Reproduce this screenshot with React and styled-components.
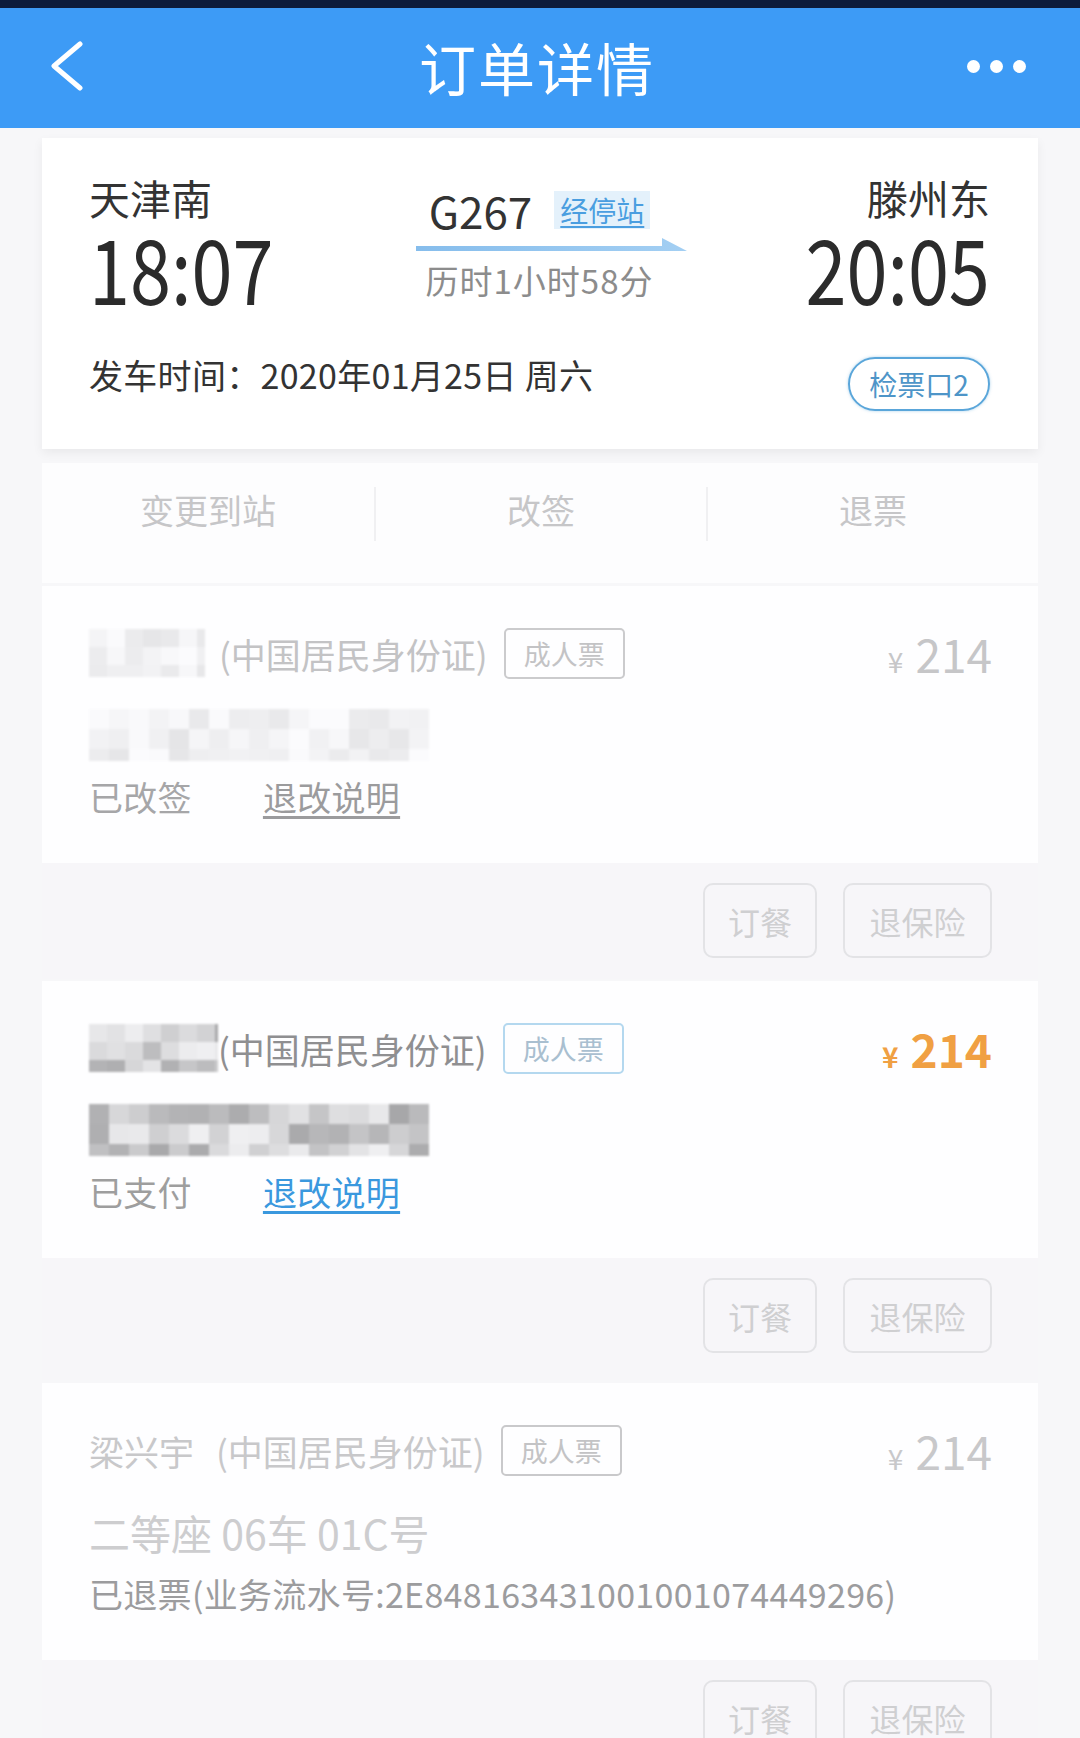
import React from "react";
import styled, { createGlobalStyle } from "styled-components";

const GlobalStyle = createGlobalStyle`
  html, body {
    margin: 0;
    padding: 0;
    height: 1738px;
    overflow: hidden;
    background: #f7f7f9;
  }
  body {
    font-family: "Noto Sans CJK SC", "Noto Sans", sans-serif;
    color: #333;
  }
  * { box-sizing: border-box; }
`;

const Page = styled.div`
  width: 1080px;
  height: 1738px;
  overflow: hidden;
  background: #f7f7f9;
`;

const StatusStrip = styled.div`
  height: 8px;
  background: #0c1c3c;
`;

const Header = styled.header`
  height: 120px;
  background: #3d9bf6;
  display: grid;
  grid-template-columns: 1fr auto 1fr;
  align-items: center;
  padding: 0 54px 4px 48px;
`;

const BackButton = styled.div`
  display: flex;
  align-items: center;
`;

const Title = styled.h1`
  margin: 0;
  font-size: 57px;
  font-weight: 400;
  color: #fff;
  letter-spacing: 2px;
  line-height: 1;
`;

const Dots = styled.div`
  justify-self: end;
  display: flex;
  gap: 10px;
`;

const Dot = styled.span`
  width: 13px;
  height: 13px;
  border-radius: 50%;
  background: #fff;
`;

const Content = styled.main`
  padding: 10px 42px 0;
  display: flex;
  flex-direction: column;
`;

const TripCard = styled.section`
  background: #fff;
  padding: 36px 48px 38px 47px;
  box-shadow: 0 4px 10px rgba(0, 0, 0, 0.06);
`;

const TripRow = styled.div`
  display: flex;
  justify-content: space-between;
`;

const StationCol = styled.div`
  display: flex;
  flex-direction: column;
  align-items: ${(p) => (p.$right ? "flex-end" : "flex-start")};
  width: 230px;
`;

const Station = styled.div`
  font-size: 41px;
  line-height: 46px;
  color: #333;
`;

const Time = styled.div`
  margin-top: 8px;
  font-size: 90px;
  line-height: 76px;
  height: 80px;
  color: #2b2b2b;
  transform: scaleX(0.82);
  transform-origin: ${(p) => (p.$right ? "right" : "left")} center;
`;

const MiddleCol = styled.div`
  flex: 1;
  display: flex;
  flex-direction: column;
  align-items: center;
  padding-top: 12px;
`;

const TrainRow = styled.div`
  display: flex;
  align-items: center;
  height: 48px;
`;

const TrainNo = styled.span`
  font-size: 44px;
  color: #333;
`;

const StopsLink = styled.span`
  margin-left: 22px;
  padding: 2px 6px;
  background: #e4f1fb;
  color: #4a9ee0;
  font-size: 28px;
  line-height: 34px;
  text-decoration: underline;
  text-underline-offset: 4px;
`;

const Arrow = styled.svg`
  display: block;
  margin: 4px 0 0 24px;
`;

const Duration = styled.div`
  margin-top: 8px;
  font-size: 33px;
  line-height: 40px;
  letter-spacing: 1px;
  color: #8c8c8c;
`;

const DateRow = styled.div`
  margin-top: 49px;
  display: flex;
  justify-content: space-between;
  align-items: flex-start;
`;

const DepartDate = styled.div`
  font-size: 34px;
  line-height: 36px;
  letter-spacing: 0.3px;
  color: #333;
`;

const GateBadge = styled.div`
  width: 142px;
  height: 54px;
  border: 2.5px solid #5aa6da;
  border-radius: 27px;
  display: flex;
  align-items: center;
  justify-content: center;
  font-size: 28px;
  color: #4e95c8;
  box-shadow: 0 0 3px rgba(90, 166, 218, 0.5);
`;

const ActionTabs = styled.nav`
  margin-top: 14px;
  height: 120px;
  background: #fdfdfe;
  display: grid;
  grid-template-columns: repeat(3, 1fr);
  align-items: start;
  padding-top: 24px;
`;

const Tab = styled.div`
  text-align: center;
  font-size: 34px;
  color: #c6c6c8;
  height: 54px;
  line-height: 46px;
  border-left: ${(p) => (p.$divided ? "2px solid #f0f0f2" : "none")};
`;

const PassengerCard = styled.section`
  margin-top: ${(p) => p.$gap}px;
  display: flex;
  flex-direction: column;
`;

const PassengerBody = styled.div`
  height: 277px;
  background: #fefeff;
  padding: 40px 46px 0 47px;
`;

const NameRow = styled.div`
  display: flex;
  align-items: center;
  height: 54px;
`;

const NameText = styled.span`
  font-size: 35px;
  color: ${(p) => p.$color};
  white-space: nowrap;
`;

const HolderName = styled.span`
  margin-right: 22px;
`;

const TicketType = styled.span`
  margin-left: 16px;
  width: 121px;
  height: 51px;
  border: 2px solid ${(p) => p.$border};
  border-radius: 5px;
  display: flex;
  align-items: center;
  justify-content: center;
  font-size: 27px;
  color: ${(p) => p.$color};
`;

const Price = styled.div`
  margin-left: auto;
  display: flex;
  align-items: baseline;
  gap: 12px;
  color: ${(p) => p.$color};
  font-weight: ${(p) => (p.$bold ? 700 : 400)};
`;

const Yen = styled.span`
  font-size: 28px;
`;

const Amount = styled.span`
  font-size: 46px;
  line-height: 54px;
`;

const SeatRow = styled.div`
  margin-top: 26px;
  height: 58px;
  display: flex;
  align-items: center;
  font-size: 41px;
  color: ${(p) => p.$color};
  white-space: pre;
`;

const StatusRow = styled.div`
  margin-top: 12px;
  height: 40px;
  display: flex;
  align-items: center;
  font-size: 34px;
  letter-spacing: 0.3px;
  color: ${(p) => p.$color};
  white-space: nowrap;
`;

const RulesLink = styled.span`
  margin-left: 71px;
  color: ${(p) => p.$color};
  text-decoration: underline;
  text-underline-offset: 5px;
`;

const PassengerFooter = styled.div`
  height: ${(p) => p.$height}px;
  background: #f7f6f9;
  display: flex;
  justify-content: flex-end;
  align-items: flex-start;
  gap: 26px;
  padding: 20px 46px 0 0;
`;

const GhostButton = styled.div`
  width: ${(p) => p.$width}px;
  height: 75px;
  border: 2px solid #e3e3e6;
  border-radius: 10px;
  display: flex;
  align-items: center;
  justify-content: center;
  font-size: 32px;
  color: #cfcfd1;
`;

const MosaicBox = styled.svg`
  display: block;
  filter: blur(1.2px);
  flex-shrink: 0;
  margin-right: ${(p) => p.$after}px;
`;

const Mosaic = ({ width, height, cell, light, seed, after = 0 }) => {
  let s = seed;
  const rand = () => {
    s = (s * 9301 + 49297) % 233280;
    return s / 233280;
  };
  const cells = [];
  for (let y = 0; y < height; y += cell) {
    for (let x = 0; x < width; x += cell) {
      const r = rand();
      const v = light ? Math.round(228 + r * 24) : Math.round(165 + r * 75);
      cells.push(
        <rect key={`${x}-${y}`} x={x} y={y} width={cell} height={cell} fill={`rgb(${v},${v},${v + 2})`} />
      );
    }
  }
  return (
    <MosaicBox width={width} height={height} $after={after}>
      {cells}
    </MosaicBox>
  );
};

const palettes = {
  changed: {
    name: "#c3c3c5",
    badgeBorder: "#cbcbcd",
    badgeText: "#c3c3c5",
    price: "#c6c6c8",
    status: "#a6a6a8",
    link: "#9b9b9d",
  },
  paid: {
    name: "#8f8f91",
    badgeBorder: "#b4d8ef",
    badgeText: "#a9bfd0",
    price: "#f0a043",
    status: "#9e9e9e",
    link: "#3a98de",
  },
  refunded: {
    name: "#c8c8ca",
    badgeBorder: "#c9c9cb",
    badgeText: "#c3c3c5",
    price: "#c8c8ca",
    seat: "#cdcdcf",
    status: "#9c9c9e",
  },
};

const Passenger = ({ variant, gap, footerHeight, name, seat, status, refundNo, seed }) => {
  const c = palettes[variant];
  const paid = variant === "paid";
  return (
    <PassengerCard $gap={gap}>
      <PassengerBody>
        <NameRow>
          {!name && <Mosaic width={paid ? 129 : 116} height={48} cell={18} light={!paid} seed={seed} after={paid ? 0 : 14} />}
          <NameText $color={c.name}>
            {name && <HolderName>{name}</HolderName>}
            (中国居民身份证)
          </NameText>
          <TicketType $border={c.badgeBorder} $color={c.badgeText}>
            成人票
          </TicketType>
          <Price $color={c.price} $bold={paid}>
            <Yen>¥</Yen>
            <Amount>214</Amount>
          </Price>
        </NameRow>
        <SeatRow $color={c.seat}>
          {seat || <Mosaic width={340} height={52} cell={20} light={!paid} seed={seed + 7} />}
        </SeatRow>
        <StatusRow $color={c.status}>
          {refundNo ? (
            <>已退票(业务流水号:{refundNo})</>
          ) : (
            <>
              {status}
              <RulesLink $color={c.link}>退改说明</RulesLink>
            </>
          )}
        </StatusRow>
      </PassengerBody>
      <PassengerFooter $height={footerHeight}>
        <GhostButton $width={114}>订餐</GhostButton>
        <GhostButton $width={149}>退保险</GhostButton>
      </PassengerFooter>
    </PassengerCard>
  );
};

const App = () => {
  return (
    <Page>
      <GlobalStyle />
      <StatusStrip />
      <Header>
        <BackButton>
          <svg width="36" height="50" viewBox="0 0 36 50">
            <polyline points="32,3 6,25 32,47" fill="none" stroke="#fff" strokeWidth="5" strokeLinecap="round" strokeLinejoin="round" />
          </svg>
        </BackButton>
        <Title>订单详情</Title>
        <Dots>
          <Dot />
          <Dot />
          <Dot />
        </Dots>
      </Header>
      <Content>
        <TripCard>
          <TripRow>
            <StationCol>
              <Station>天津南</Station>
              <Time>18:07</Time>
            </StationCol>
            <MiddleCol>
              <TrainRow>
                <TrainNo>G267</TrainNo>
                <StopsLink>经停站</StopsLink>
              </TrainRow>
              <Arrow width="272" height="14" viewBox="0 0 272 14">
                <defs>
                  <linearGradient id="arrowFill" x1="0" x2="1" y1="0" y2="0">
                    <stop offset="0" stopColor="#86bdec" />
                    <stop offset="1" stopColor="#a3cff3" />
                  </linearGradient>
                </defs>
                <polygon points="0,8 246,8 246,0 271,13 0,13" fill="url(#arrowFill)" />
              </Arrow>
              <Duration>历时1小时58分</Duration>
            </MiddleCol>
            <StationCol $right>
              <Station>滕州东</Station>
              <Time $right>20:05</Time>
            </StationCol>
          </TripRow>
          <DateRow>
            <DepartDate>发车时间：2020年01月25日 周六</DepartDate>
            <GateBadge>检票口2</GateBadge>
          </DateRow>
        </TripCard>
        <ActionTabs>
          <Tab>变更到站</Tab>
          <Tab $divided>改签</Tab>
          <Tab $divided>退票</Tab>
        </ActionTabs>
        <Passenger variant="changed" gap={3} footerHeight={116} status="已改签" seed={11} />
        <Passenger variant="paid" gap={2} footerHeight={122} status="已支付" seed={42} />
        <Passenger
          variant="refunded"
          gap={3}
          footerHeight={118}
          name="梁兴宇"
          seat="二等座 06车 01C号"
          refundNo="2E848163431001001074449296"
          seed={5}
        />
      </Content>
    </Page>
  );
};

export default App;
